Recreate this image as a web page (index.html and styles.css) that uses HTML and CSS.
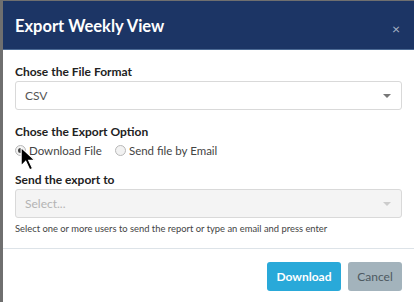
FILE: index.html
```html
<!DOCTYPE html>
<html>
<head>
<meta charset="utf-8">
<link rel="stylesheet" href="styles.css">
</head>
<body>
<div class="modal">
  <div class="modal-header">
    <h1 class="modal-title">Export Weekly View</h1>
    <span class="close">&times;</span>
  </div>
  <div class="modal-body">
    <label class="field-label">Chose the File Format</label>
    <div class="select">
      <span class="select-value">CSV</span>
      <span class="caret"></span>
    </div>
    <label class="field-label second">Chose the Export Option</label>
    <div class="radios">
      <span class="radio-item"><span class="radio checked"></span>Download File</span>
      <span class="radio-item"><span class="radio"></span>Send file by Email</span>
      <svg class="cursor" width="16" height="26" viewBox="0 0 14 22"><path d="M1 1 L1 17 L5 13 L8.5 20.5 L11 19.3 L7.6 12.2 L13 12.2 Z" fill="#000" stroke="#fff" stroke-width="1"/></svg>
    </div>
    <label class="field-label third">Send the export to</label>
    <div class="select disabled">
      <span class="select-placeholder">Select...</span>
      <span class="caret light"></span>
    </div>
    <p class="help">Select one or more users to send the report or type an email and press enter</p>
  </div>
  <div class="modal-footer">
    <button class="btn btn-primary">Download</button>
    <button class="btn btn-cancel">Cancel</button>
  </div>
</div>
</body>
</html>
```
FILE: styles.css
```css
* { box-sizing: border-box; }
html, body { margin: 0; padding: 0; }
body {
  background: #6f6f6f;
  font-family: "Lato", "Open Sans", sans-serif;
  width: 414px;
  height: 302px;
  overflow: hidden;
}
.modal {
  margin: 1px 0 0 3px;
  background: #fff;
  height: 301px;
}
.modal-header {
  background: #1c3565;
  height: 49px;
  border-bottom: 1px solid #4c6a94;
  display: flex;
  align-items: center;
  justify-content: space-between;
  padding: 0 14px 0 12px;
}
.modal-title {
  margin: 0;
  color: #fff;
  font-size: 16.5px;
  font-weight: 700;
  padding-top: 1px;
}
.close {
  color: #aab4c6;
  font-size: 14px;
  padding-top: 6px;
}
.modal-body {
  padding: 14px 12px 0 12px;
}
.field-label {
  display: block;
  font-size: 12px;
  font-weight: 700;
  color: #222;
  line-height: 16px;
  margin-bottom: 1px;
}
.field-label.second { margin-top: 14px; }
.field-label.third { margin-top: 13px; }
.select {
  height: 29px;
  border: 1px solid #d9d9d9;
  border-radius: 3px;
  display: flex;
  align-items: center;
  justify-content: space-between;
  padding: 0 10px 0 9px;
  font-size: 12px;
  color: #555;
}
.select.disabled {
  background: #f4f4f4;
}
.select-placeholder { color: #b3b3b3; }
.caret {
  width: 0; height: 0;
  border-left: 4px solid transparent;
  border-right: 4px solid transparent;
  border-top: 4px solid #777;
}
.caret.light { border-top-color: #ccc; }
.radios {
  display: flex;
  gap: 13px;
  font-size: 11.5px;
  color: #444;
  height: 18px;
  align-items: center;
  position: relative;
}
.radio-item { display: flex; align-items: center; gap: 3px; }
.radio {
  width: 11px; height: 11px;
  border-radius: 50%;
  border: 1px solid #b8b8b8;
  background: #f2f2f2;
  display: inline-flex;
  align-items: center;
  justify-content: center;
}
.radio.checked::after {
  content: "";
  width: 5px; height: 5px;
  border-radius: 50%;
  background: #444;
}
.cursor {
  position: absolute;
  left: 5px;
  top: 5px;
}
.help {
  margin: 4px 0 0 0;
  font-size: 9.4px;
  color: #444;
  line-height: 13px;
}
.modal-footer {
  border-top: 1px solid #dde3e8;
  margin-top: 13px;
  display: flex;
  justify-content: flex-end;
  gap: 7px;
  padding: 13px 12px 0 0;
}
.btn {
  border: none;
  border-radius: 3px;
  height: 29px;
  font-family: inherit;
  font-size: 12px;
  color: #fff;
  padding: 0;
}
.btn-primary { background: #29a9d9; width: 74px; font-weight: 700; }
.btn-cancel { background: #a3b3bc; width: 54px; color: #4d5961; }
```
